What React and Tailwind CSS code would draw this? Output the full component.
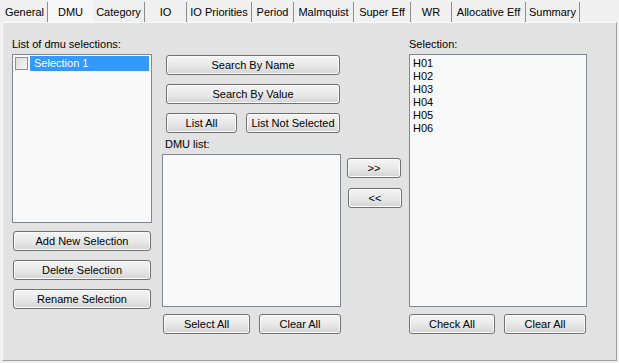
const tabs = [
  { label: 'General', w: 'w-[46px]' },
  { label: 'DMU', w: 'w-[45px]', active: true },
  { label: 'Category', w: 'w-[52px]' },
  { label: 'IO', w: 'w-[42px]' },
  { label: 'IO Priorities', w: 'w-[65px]' },
  { label: 'Period', w: 'w-[42px]' },
  { label: 'Malmquist', w: 'w-[60px]' },
  { label: 'Super Eff', w: 'w-[57px]' },
  { label: 'WR', w: 'w-[41px]' },
  { label: 'Allocative Eff', w: 'w-[74px]' },
  { label: 'Summary', w: 'w-[54px]' },
];

const selection = ['H01', 'H02', 'H03', 'H04', 'H05', 'H06'];

function Btn({ className = '', children }) {
  return (
    <button
      className={`h-[20px] rounded-[3px] border border-[#707070] bg-gradient-to-b from-[#f4f4f4] via-[#e9e9e9] to-[#d4d4d4] text-[11px] leading-[18px] text-black shadow-[inset_0_0_0_1px_#fbfbfb] ${className}`}
    >
      {children}
    </button>
  );
}

function Label({ children }) {
  return <div className="h-[13px] text-[11px] leading-[13px] text-black">{children}</div>;
}

export default function App() {
  return (
    <div className="w-[619px] h-[363px] bg-[#f0f0f0] font-['Liberation_Sans',Arial,sans-serif] text-[11px] overflow-hidden">
      {/* tab strip */}
      <div className="flex h-[22px] pl-[2px] items-end">
        {tabs.map((t) =>
          t.active ? (
            <div
              key={t.label}
              className={`${t.w} h-[22px] bg-[#f7f7f7] flex items-center justify-center pt-[2px] text-black`}
            >
              {t.label}
            </div>
          ) : (
            <div
              key={t.label}
              className={`${t.w} h-[20px] bg-[#f0f0f0] border-r border-[#8c8c8c] flex items-center justify-center text-black whitespace-nowrap`}
            >
              {t.label}
            </div>
          )
        )}
      </div>

      {/* tab page */}
      <div className="ml-[2px] w-[615px] h-[339px] border border-t-[#fbfbfb] border-l-[#fbfbfb] border-r-[#a0a0a0] border-b-[#a0a0a0] bg-[#e2e2e2] flex items-start">
        {/* selections column */}
        <div className="ml-[9px] mt-[15px] w-[140px] flex flex-col">
          <Label>List of dmu selections:</Label>
          <div className="mt-[3px] h-[169px] border border-[#828790] bg-[#f9f9f9] pt-[1px] pl-[2px] pr-[2px]">
            <div className="flex items-center h-[15px]">
              <span className="w-[13px] h-[13px] border border-[#8e8f8f] bg-gradient-to-br from-[#dcdcdc] to-[#f6f6f6] shrink-0" />
              <span className="ml-[2px] flex-1 h-[15px] bg-[#3399ff] text-white leading-[15px] pl-[4px]">
                Selection 1
              </span>
            </div>
          </div>
          <div className="ml-[1px] mt-[8px] flex flex-col gap-[9px]">
            <Btn className="w-[138px]">Add New Selection</Btn>
            <Btn className="w-[138px]">Delete Selection</Btn>
            <Btn className="w-[138px]">Rename Selection</Btn>
          </div>
        </div>

        {/* dmu list column */}
        <div className="ml-[10px] mt-[32px] w-[179px] flex flex-col">
          <Btn className="ml-[4px] w-[174px]">Search By Name</Btn>
          <Btn className="ml-[4px] mt-[9px] w-[174px]">Search By Value</Btn>
          <div className="ml-[4px] mt-[9px] flex gap-[9px]">
            <Btn className="w-[71px]">List All</Btn>
            <Btn className="w-[94px]">List Not Selected</Btn>
          </div>
          <div className="ml-[3px] mt-[5px]">
            <Label>DMU list:</Label>
          </div>
          <div className="mt-[3px] h-[153px] border border-[#828790] bg-[#f9f9f9]" />
          <div className="ml-[1px] mt-[7px] flex gap-[9px]">
            <Btn className="w-[87px]">Select All</Btn>
            <Btn className="w-[82px]">Clear All</Btn>
          </div>
        </div>

        {/* move buttons */}
        <div className="ml-[6px] mt-[135px] w-[55px] flex flex-col">
          <Btn className="w-[54px]">&gt;&gt;</Btn>
          <Btn className="ml-[1px] mt-[10px] w-[54px]">&lt;&lt;</Btn>
        </div>

        {/* selection column */}
        <div className="ml-[7px] mt-[15px] w-[178px] flex flex-col">
          <Label>Selection:</Label>
          <div className="mt-[3px] h-[253px] border border-[#828790] bg-[#f9f9f9] pt-[2px] pl-[3px]">
            {selection.map((s) => (
              <div key={s} className="h-[13px] leading-[13px] text-black">
                {s}
              </div>
            ))}
          </div>
          <div className="mt-[7px] flex gap-[9px]">
            <Btn className="w-[86px]">Check All</Btn>
            <Btn className="w-[82px]">Clear All</Btn>
          </div>
        </div>
      </div>
    </div>
  );
}
